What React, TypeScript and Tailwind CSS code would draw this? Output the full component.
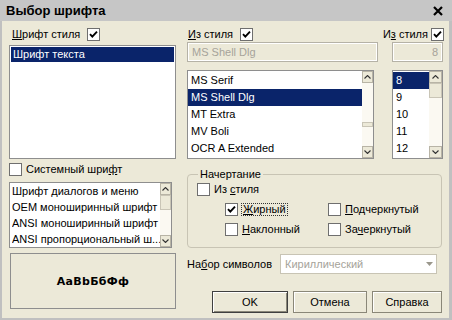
import React from 'react';

// Флажок в стиле классического Windows
const Flag: React.FC<{ checked?: boolean }> = ({ checked }) => (
  <span className="w-[13px] h-[13px] shrink-0 border border-[#6f6f6f] bg-white flex items-center justify-center">
    {checked && (
      <svg width="9" height="9" viewBox="0 0 9 9">
        <path d="M1 4.2 L3.3 6.6 L8 1.6" stroke="#000" strokeWidth="1.9" fill="none" />
      </svg>
    )}
  </span>
);

const Arrow: React.FC<{ down?: boolean }> = ({ down }) => (
  <div className="h-[12px] shrink-0 bg-[#ece9d8] border border-[#b8b4a6] flex items-center justify-center">
    <svg width="7" height="4" viewBox="0 0 7 4">
      <path d={down ? 'M0.5 0.5 L3.5 3.5 L6.5 0.5' : 'M0.5 3.5 L3.5 0.5 L6.5 3.5'} stroke="#333" strokeWidth="1.1" fill="none" />
    </svg>
  </div>
);

const ScrollBar: React.FC<{ w: string; gap: string; thumb: string }> = ({ w, gap, thumb }) => (
  <div className={`${w} h-full flex flex-col bg-[#fbf9f2]`}>
    <Arrow />
    <div className={gap} />
    <div className={`${thumb} shrink-0 bg-[#ece9d8] border border-[#c9c5b6]`} />
    <div className="flex-1" />
    <Arrow down />
  </div>
);

const U: React.FC<{ children: React.ReactNode }> = ({ children }) => <span className="underline">{children}</span>;

const fonts = ['MS Serif', 'MS Shell Dlg', 'MT Extra', 'MV Boli', 'OCR A Extended'];
const sizes = ['8', '9', '10', '11', '12'];
const systemFonts = ['Шрифт диалогов и меню', 'OEM моноширинный шрифт', 'ANSI моноширинный шрифт', 'ANSI пропорциональный ш...'];

const App: React.FC = () => {
  return (
    <div className="w-[452px] h-[320px] flex flex-col overflow-hidden bg-[#ece9d8] text-black text-[11px] leading-none font-['Liberation_Sans',Arial,sans-serif]">
      {/* Заголовок окна */}
      <div className="h-[21px] shrink-0 bg-[#c6c6c6] flex items-center justify-between pl-[6px] pr-[9px]">
        <span className="text-[13px] font-bold">Выбор шрифта</span>
        <svg width="10" height="10" viewBox="0 0 10 10">
          <path d="M1 1 L9 9 M9 1 L1 9" stroke="#000" strokeWidth="2.2" />
        </svg>
      </div>

      <div className="flex-1 flex border-l-[2px] border-r-[3px] border-b-[2px] border-[#c0c0c0] pl-[7px]">
        {/* Левая колонка */}
        <div className="w-[167px] flex flex-col">
          <div className="mt-[7px] h-[13px] flex items-center">
            <span className="w-[78px] pl-[3px]"><U>Ш</U>рифт стиля</span>
            <Flag checked />
          </div>
          <div className="mt-[4px] h-[114px] border border-[#8e8e8e] bg-white p-px">
            <div className="h-[15px] bg-[#0a246a] text-white flex items-center px-[2px]">Шрифт текста</div>
          </div>
          <div className="mt-[4px] h-[13px] flex items-center gap-[4px]">
            <Flag />
            <span>Системный шри<U>ф</U>т</span>
          </div>
          <div className="mt-[6px] w-[163px] h-[66px] border border-[#8e8e8e] bg-white flex">
            <div className="flex-1 min-w-0 flex flex-col pl-[2px]">
              {systemFonts.map((f) => (
                <div key={f} className="h-[16px] flex items-center whitespace-nowrap overflow-hidden">{f}</div>
              ))}
            </div>
            <ScrollBar w="w-[11px]" gap="h-0" thumb="h-[15px]" />
          </div>
          <div className="mt-[5px] ml-px w-[166px] h-[56px] border border-[#8e8e8e] flex items-center justify-center">
            <span className="font-bold text-[11px] font-['DejaVu_Sans',sans-serif] tracking-[0.3px]">АаBbБбФф</span>
          </div>
        </div>

        {/* Правая часть */}
        <div className="ml-[11px] w-[256px] flex flex-col">
          <div className="flex">
            <div className="w-[191px] flex flex-col">
              <div className="mt-[7px] h-[13px] flex items-center">
                <span className="w-[53px] pl-px"><U>И</U>з стиля</span>
                <Flag checked />
              </div>
              <div className="mt-px h-[20px] border border-[#b5b2a6] shadow-[inset_0_0_0_1px_#fff] flex items-center px-[4px] text-[#a6a39a]">MS Shell Dlg</div>
              <div className="mt-[8px] w-[187px] h-[89px] border border-[#8e8e8e] bg-white flex">
                <div className="flex-1 flex flex-col pt-px">
                  {fonts.map((f) => (
                    <div key={f} className={`h-[17px] flex items-center px-[3px] ${f === 'MS Shell Dlg' ? 'bg-[#0a246a] text-white' : ''}`}>{f}</div>
                  ))}
                </div>
                <ScrollBar w="w-[11px]" gap="h-[39px]" thumb="h-[5px]" />
              </div>
            </div>
            <div className="ml-[14px] w-[51px] flex flex-col">
              <div className="mt-[7px] h-[13px] flex items-center justify-end gap-[3px] -mr-px">
                <span className="whitespace-nowrap">И<U>з</U> стиля</span>
                <Flag checked />
              </div>
              <div className="mt-px h-[20px] border border-[#b5b2a6] shadow-[inset_0_0_0_1px_#fff] flex items-center justify-end px-[4px] text-[#a6a39a]">8</div>
              <div className="mt-[8px] h-[89px] border border-[#8e8e8e] bg-white flex">
                <div className="flex-1 flex flex-col pt-px">
                  {sizes.map((s) => (
                    <div key={s} className={`h-[17px] flex items-center px-[3px] ${s === '8' ? 'bg-[#0a246a] text-white' : ''}`}>{s}</div>
                  ))}
                </div>
                <ScrollBar w="w-[13px]" gap="h-0" thumb="h-[15px]" />
              </div>
            </div>
          </div>

          {/* Начертание */}
          <fieldset className="mt-[9px] w-[255px] h-[80px] border border-[#c8c4b4] rounded-[4px] px-[9px] pb-[4px]">
            <legend className="px-[2px] ml-[1px] h-[13px] leading-[13px]">Начертание</legend>
            <div className="mt-[2px] h-[13px] flex items-center gap-[4px]">
              <Flag />
              <span>Из <U>с</U>тиля</span>
            </div>
            <div className="mt-[7px] pl-[28px] grid grid-cols-[103px_1fr] gap-y-[7px]">
              <div className="h-[13px] flex items-center gap-[3px]">
                <Flag checked />
                <span className="border border-dotted border-[#333] px-px leading-[11px]"><U>Ж</U>ирный</span>
              </div>
              <div className="h-[13px] flex items-center gap-[4px]">
                <Flag />
                <span><U>П</U>одчеркнутый</span>
              </div>
              <div className="h-[13px] flex items-center gap-[4px]">
                <Flag />
                <span><U>Н</U>аклонный</span>
              </div>
              <div className="h-[13px] flex items-center gap-[4px]">
                <Flag />
                <span>За<U>ч</U>еркнутый</span>
              </div>
            </div>
          </fieldset>

          <div className="mt-[6px] h-[20px] flex items-center">
            <span className="w-[93px]">На<U>б</U>ор символов</span>
            <div className="w-[157px] h-[20px] border border-[#c8c4b4] bg-white flex items-center">
              <span className="flex-1 pl-[4px] text-[#a6a39a]">Кириллический</span>
              <div className="w-[13px] h-full flex items-center justify-center">
                <svg width="7" height="4" viewBox="0 0 7 4"><path d="M0 0 H7 L3.5 4 Z" fill="#9a978c" /></svg>
              </div>
            </div>
          </div>

          <div className="mt-[17px] flex justify-end gap-[5px] pr-px">
            <button className="w-[76px] h-[22px] bg-[#ece9d8] border border-[#404040] shadow-[inset_1px_1px_0_#fff,inset_-1px_-1px_0_#8a8778]">OK</button>
            <button className="w-[74px] h-[22px] bg-[#ece9d8] border border-[#8a8778] shadow-[inset_1px_1px_0_#fff]">Отмена</button>
            <button className="w-[70px] h-[22px] bg-[#ece9d8] border border-[#8a8778] shadow-[inset_1px_1px_0_#fff]">Справка</button>
          </div>
        </div>
      </div>
    </div>
  );
};

export default App;
